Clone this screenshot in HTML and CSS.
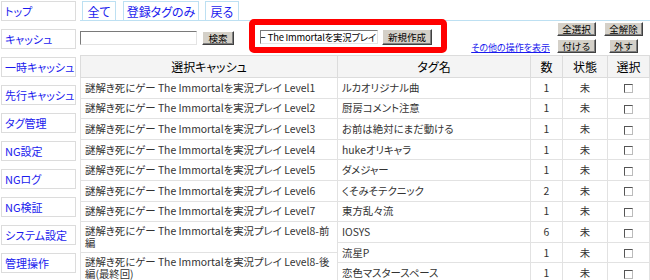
FILE: index.html
```html
<!DOCTYPE html>
<html lang="ja">

<head>
    <meta charset="UTF-8">
    <meta name="viewport" content="width=device-width, initial-scale=1.0">
    <title>タグ管理</title>
    <link rel="stylesheet" href="styles.css">
</head>

<body>
    <div class="page">
        <!-- 左メニュー -->
        <ul class="side-menu">
            <li><a href="#">トップ</a></li>
            <li><a href="#">キャッシュ</a></li>
            <li><a href="#">一時キャッシュ</a></li>
            <li><a href="#">先行キャッシュ</a></li>
            <li><a href="#">タグ管理</a></li>
            <li><a href="#">NG設定</a></li>
            <li><a href="#">NGログ</a></li>
            <li><a href="#">NG検証</a></li>
            <li><a href="#">システム設定</a></li>
            <li><a href="#">管理操作</a></li>
        </ul>

        <div class="main">
            <div class="tabs">
                <a class="tab tab-all" href="#">全て</a>
                <a class="tab tab-reg" href="#">登録タグのみ</a>
                <a class="tab tab-back" href="#">戻る</a>
            </div>

            <div class="toolbar">
                <input class="search-box" type="text">
                <button class="btn btn-search">検索</button>

                <div class="new-tag">
                    <div class="tag-name"><span>謎解き死にゲー The Immortalを実況プレイ</span></div>
                    <button class="btn btn-new">新規作成</button>
                </div>

                <a class="more-link" href="#">その他の操作を表示</a>
                <div class="bulk">
                    <button class="btn">全選択</button>
                    <button class="btn">全解除</button>
                    <button class="btn">付ける</button>
                    <button class="btn">外す</button>
                </div>
            </div>

            <div class="lists">
                <table class="cache-table">
                    <thead>
                        <tr><th>選択キャッシュ</th></tr>
                    </thead>
                    <tbody>
                        <tr><td>謎解き死にゲー The Immortalを実況プレイ Level1</td></tr>
                        <tr><td>謎解き死にゲー The Immortalを実況プレイ Level2</td></tr>
                        <tr><td>謎解き死にゲー The Immortalを実況プレイ Level3</td></tr>
                        <tr><td>謎解き死にゲー The Immortalを実況プレイ Level4</td></tr>
                        <tr><td>謎解き死にゲー The Immortalを実況プレイ Level5</td></tr>
                        <tr><td>謎解き死にゲー The Immortalを実況プレイ Level6</td></tr>
                        <tr><td>謎解き死にゲー The Immortalを実況プレイ Level7</td></tr>
                        <tr><td>謎解き死にゲー The Immortalを実況プレイ Level8-前<br>編</td></tr>
                        <tr><td>謎解き死にゲー The Immortalを実況プレイ Level8-後<br>編(最終回)</td></tr>
                    </tbody>
                </table>

                <table class="tag-table">
                    <thead>
                        <tr>
                            <th class="col-name">タグ名</th>
                            <th class="col-count">数</th>
                            <th class="col-state">状態</th>
                            <th class="col-check">選択</th>
                        </tr>
                    </thead>
                    <tbody>
                        <tr><td>ルカオリジナル曲</td><td class="c">1</td><td class="c">未</td><td class="c"><input type="checkbox"></td></tr>
                        <tr><td>厨房コメント注意</td><td class="c">1</td><td class="c">未</td><td class="c"><input type="checkbox"></td></tr>
                        <tr><td>お前は絶対にまだ動ける</td><td class="c">1</td><td class="c">未</td><td class="c"><input type="checkbox"></td></tr>
                        <tr><td>hukeオリキャラ</td><td class="c">1</td><td class="c">未</td><td class="c"><input type="checkbox"></td></tr>
                        <tr><td>ダメジャー</td><td class="c">1</td><td class="c">未</td><td class="c"><input type="checkbox"></td></tr>
                        <tr><td>くそみそテクニック</td><td class="c">2</td><td class="c">未</td><td class="c"><input type="checkbox"></td></tr>
                        <tr><td>東方乱々流</td><td class="c">1</td><td class="c">未</td><td class="c"><input type="checkbox"></td></tr>
                        <tr><td>IOSYS</td><td class="c">6</td><td class="c">未</td><td class="c"><input type="checkbox"></td></tr>
                        <tr><td>流星P</td><td class="c">1</td><td class="c">未</td><td class="c"><input type="checkbox"></td></tr>
                        <tr><td>恋色マスタースペース</td><td class="c">1</td><td class="c">未</td><td class="c"><input type="checkbox"></td></tr>
                    </tbody>
                </table>
            </div>
        </div>
    </div>
</body>

</html>
```

FILE: styles.css
```css
* {
    box-sizing: border-box;
}

html,
body {
    overflow: hidden;
}

body {
    margin: 0;
    background-color: #fff;
    color: #333;
    font-family: "Noto Sans CJK JP", "Noto Sans", sans-serif;
    font-size: 10.4px;
    font-feature-settings: "palt";
}

.page {
    display: flex;
}

/* 左メニュー */
.side-menu {
    flex: none;
    width: 80px;
    margin: 0;
    padding: 1px 0 0 1px;
    list-style: none;
}

.side-menu li {
    margin-bottom: 8px;
}

.side-menu a {
    display: flex;
    align-items: center;
    width: 75px;
    height: 20px;
    padding-left: 3px;
    border: 1px solid #dcdcdc;
    color: #1a1aee;
    text-decoration: none;
    font-size: 11px;
}

.main {
    flex: 1;
    min-width: 0;
}

/* タブ */
.tabs {
    display: flex;
    height: 21px;
    padding: 1px 0 0 2px;
    border-bottom: 1px solid #bde0f2;
}

.tab {
    display: flex;
    align-items: center;
    justify-content: center;
    height: 19px;
    border: 1px solid #bde0f2;
    border-bottom: none;
    color: #1a1aee;
    font-size: 12px;
    text-decoration: none;
}

.tab-all { width: 34px; }
.tab-reg { width: 76px; margin-left: 7px; }
.tab-back { width: 34px; margin-left: 6px; }

/* 操作バー */
.toolbar {
    display: flex;
    align-items: flex-start;
    height: 36px;
    margin-top: -2px;
}

.search-box,
.tag-name {
    height: 14px;
    padding: 0 2px;
    border: 1px solid;
    border-color: #7a7a7a #e4e4e4 #e4e4e4 #7a7a7a;
    background-color: #fff;
    font-family: inherit;
    font-size: 10px;
}

.search-box {
    width: 117px;
    margin-top: 12px;
}

.btn {
    height: 14px;
    padding: 0 4px;
    border: 1px solid;
    border-color: #fff #404040 #404040 #fff;
    box-shadow: inset -1px -1px #808080;
    background-color: #d4d0c8;
    color: #000;
    font-family: inherit;
    font-size: 9.5px;
    line-height: 11px;
    white-space: nowrap;
    cursor: pointer;
}

.btn-search {
    width: 32px;
    margin: 12px 0 0 5px;
}

.new-tag {
    display: flex;
    align-items: flex-start;
    gap: 4px;
    width: 198px;
    height: 34px;
    margin-left: 15px;
    padding: 4px 0 0 5px;
    border: 6px solid #f00;
    border-radius: 5px;
}

.tag-name {
    display: flex;
    justify-content: flex-end;
    width: 118px;
    margin-top: 1px;
    padding: 0 1px;
    overflow: hidden;
    white-space: nowrap;
    color: #000;
    font-size: 9.4px;
    letter-spacing: -0.2px;
    line-height: 12px;
}

.btn-new {
    width: 50px;
    height: 16px;
}

.more-link {
    margin: 22px 3px 0 auto;
    color: #1a1aee;
    font-size: 9px;
    white-space: nowrap;
}

.bulk {
    display: grid;
    grid-template-columns: 47px 47px;
    row-gap: 3px;
    justify-items: center;
    margin: 3px 3px 0 0;
}

/* 一覧 */
.lists {
    display: flex;
    align-items: flex-start;
}

table {
    border-collapse: collapse;
}

.cache-table {
    width: 258px;
}

.cache-table td {
    white-space: nowrap;
}

.tag-table {
    width: 313px;
    margin-left: -1px;
}

th {
    height: 22px;
    padding: 0;
    border: 1px solid #dcdcdc;
    background-color: #f4f4f4;
    color: #000;
    font-size: 12px;
    font-weight: normal;
}

td {
    height: 20.6px;
    padding: 3px 4px;
    border: 1px solid #e2e2e2;
    line-height: 12px;
    vertical-align: middle;
}

.col-name { width: 193px; }
.col-count { width: 32px; }
.col-state { width: 45px; }

.c {
    text-align: center;
    padding: 0;
}

.tag-table input {
    appearance: none;
    width: 9px;
    height: 9px;
    margin: 0;
    border: 1px solid;
    border-color: #555 #bbb #bbb #555;
    background-color: #fff;
    vertical-align: middle;
}
```
